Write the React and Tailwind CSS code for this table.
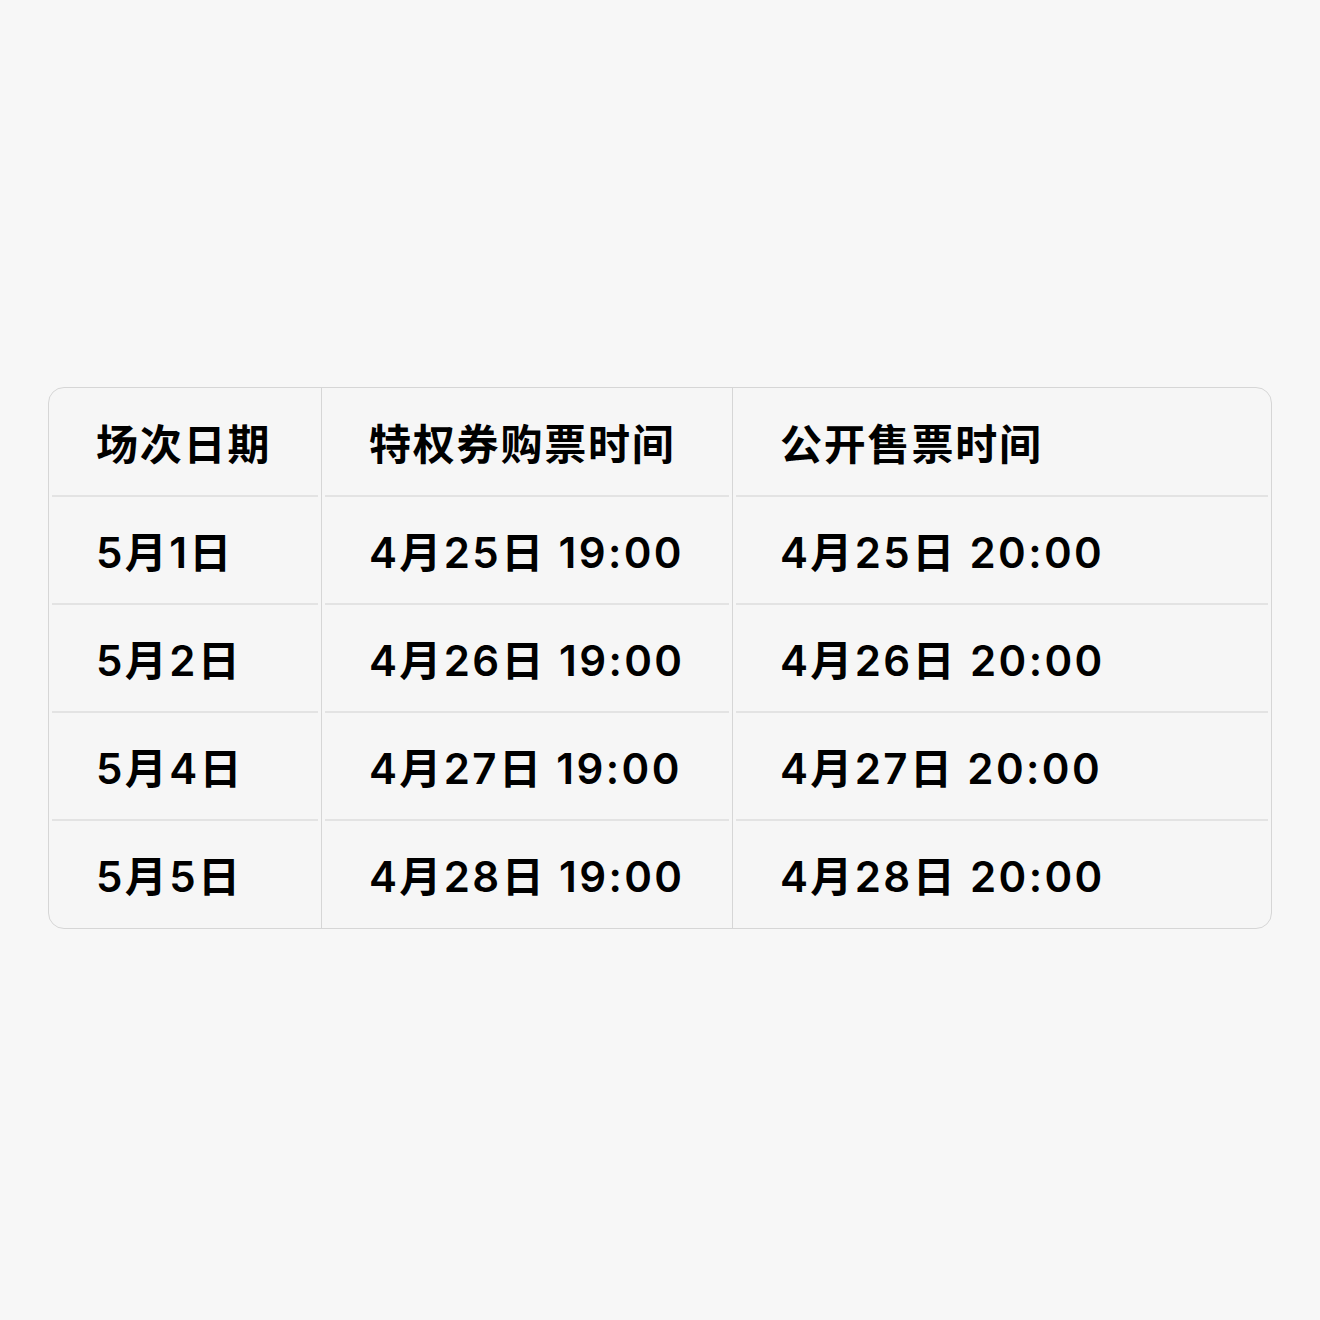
import React from "react";

const cols = [
  { w: "w-[272px]", head: "场次日期", cells: ["5月1日", "5月2日", "5月4日", "5月5日"] },
  { w: "w-[411px]", head: "特权券购票时间", cells: ["4月25日 19:00", "4月26日 19:00", "4月27日 19:00", "4月28日 19:00"] },
  { w: "flex-1", head: "公开售票时间", cells: ["4月25日 20:00", "4月26日 20:00", "4月27日 20:00", "4月28日 20:00"] },
];

function Cell({ children, head, last }) {
  return (
    <div className="relative h-[108px] flex items-center pl-[47px] pt-[6px]">
      <span
        className={
          head
            ? "text-[42px] font-bold tracking-[1.8px] text-black leading-none"
            : "text-[42px] font-semibold tracking-[2.4px] text-black leading-none"
        }
      >
        {children}
      </span>
      {!last && <div className="absolute left-[3px] right-[3px] bottom-[-1px] h-[2px] bg-[#e3e3e3]" />}
    </div>
  );
}

export default function App() {
  return (
    <div
      className="w-[1320px] h-[1320px] bg-[#f7f7f7] flex items-start pt-[387px] px-[48px]"
      style={{ fontFamily: 'Inter, "Noto Sans CJK SC", sans-serif' }}
    >
      <div className="w-full flex border border-[#d6d6d6] rounded-[16px] bg-[#f6f6f6] overflow-hidden">
        {cols.map((c, i) => (
          <div key={i} className={`${c.w} flex flex-col ${i > 0 ? "border-l border-[#d6d6d6]" : ""}`}>
            <Cell head>{c.head}</Cell>
            {c.cells.map((t, j) => (
              <Cell key={j} last={j === c.cells.length - 1}>
                {t}
              </Cell>
            ))}
          </div>
        ))}
      </div>
    </div>
  );
}
